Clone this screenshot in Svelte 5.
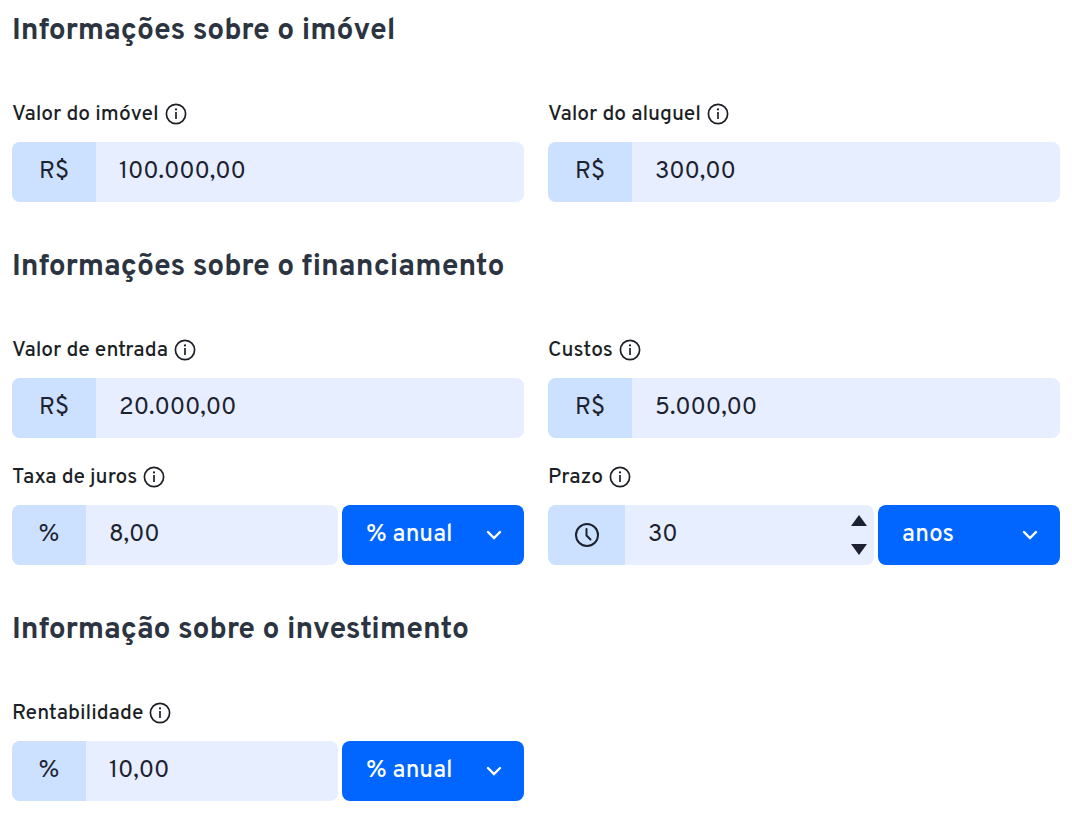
<script>
    const sections = $state([
        {
            title: 'Informações sobre o imóvel',
            fields: [
                { id: 'imovel', label: 'Valor do imóvel', affix: 'R$', value: '100.000,00' },
                { id: 'aluguel', label: 'Valor do aluguel', affix: 'R$', value: '300,00' }
            ]
        },
        {
            title: 'Informações sobre o financiamento',
            fields: [
                { id: 'entrada', label: 'Valor de entrada', affix: 'R$', value: '20.000,00' },
                { id: 'custos', label: 'Custos', affix: 'R$', value: '5.000,00' },
                { id: 'juros', label: 'Taxa de juros', affix: '%', value: '8,00', unit: '% anual', units: ['% anual', '% mensal'] },
                { id: 'prazo', label: 'Prazo', affix: 'clock', value: '30', unit: 'anos', units: ['anos', 'meses'], stepper: true }
            ]
        },
        {
            title: 'Informação sobre o investimento',
            fields: [
                { id: 'rentabilidade', label: 'Rentabilidade', affix: '%', value: '10,00', unit: '% anual', units: ['% anual', '% mensal'] }
            ]
        }
    ]);

    function step(field, amount) {
        field.value = String(Math.max(0, (parseInt(field.value, 10) || 0) + amount));
    }
</script>

<form class="simulator" onsubmit={(event) => event.preventDefault()}>
    {#each sections as section}
        <section>
            <h2>{section.title}</h2>
            <div class="grid">
                {#each section.fields as field}
                    <div class="field">
                        <div class="caption">
                            <label for={field.id}>{field.label}</label>
                            <button type="button" class="info" aria-label="Ajuda: {field.label}">
                                <svg viewBox="0 0 22 22" width="22" height="22" aria-hidden="true">
                                    <circle cx="11" cy="11" r="9.6" fill="none" stroke="currentColor" stroke-width="1.7" />
                                    <path d="M11 9v7" stroke="currentColor" stroke-width="1.7" />
                                    <circle cx="11" cy="6.4" r="1.1" fill="currentColor" />
                                </svg>
                            </button>
                        </div>

                        <div class="row">
                            <div class="box">
                                <span class="affix" class:narrow={field.affix === '%'} class:clock={field.affix === 'clock'}>
                                    {#if field.affix === 'clock'}
                                        <svg viewBox="0 0 26 26" width="26" height="26" fill="none" stroke="currentColor" stroke-width="2" aria-hidden="true">
                                            <circle cx="13" cy="13" r="11" />
                                            <path d="M12.5 7v6.5l4 4" stroke-linecap="round" stroke-linejoin="round" />
                                        </svg>
                                    {:else}
                                        {field.affix}
                                    {/if}
                                </span>
                                <input id={field.id} type="text" inputmode="decimal" bind:value={field.value} />
                                {#if field.stepper}
                                    <span class="stepper">
                                        <button type="button" aria-label="Aumentar" onclick={() => step(field, 1)}>
                                            <svg viewBox="0 0 16 11" width="16" height="11" aria-hidden="true"><path d="M8 0l8 11H0z" fill="currentColor" /></svg>
                                        </button>
                                        <button type="button" aria-label="Diminuir" onclick={() => step(field, -1)}>
                                            <svg viewBox="0 0 16 11" width="16" height="11" aria-hidden="true"><path d="M8 11L0 0h16z" fill="currentColor" /></svg>
                                        </button>
                                    </span>
                                {/if}
                            </div>

                            {#if field.units}
                                <div class="unit">
                                    <select bind:value={field.unit} aria-label="Unidade: {field.label}">
                                        {#each field.units as unit}
                                            <option value={unit}>{unit}</option>
                                        {/each}
                                    </select>
                                    <svg class="chevron" viewBox="0 0 16 10" width="16" height="10" aria-hidden="true">
                                        <path d="M2 2l6 6 6-6" fill="none" stroke="currentColor" stroke-width="2.4" stroke-linecap="round" />
                                    </svg>
                                </div>
                            {/if}
                        </div>
                    </div>
                {/each}
            </div>
        </section>
    {/each}
</form>

<style>
    :global(body) {
        background: #fff;
    }

    .simulator {
        display: grid;
        gap: 48px;
        padding: 14px 12px 12px;
        font-family: Overpass, Inter, sans-serif;
        color: #1c2230;
    }

    h2 {
        margin: 0 0 53px;
        font-size: 30px;
        line-height: 36px;
        font-weight: 700;
        color: #2b3440;
    }

    .grid {
        display: grid;
        grid-template-columns: repeat(2, minmax(0, 1fr));
        gap: 28px 24px;
    }

    .caption {
        display: flex;
        align-items: center;
        gap: 6px;
        height: 24px;
        margin-bottom: 15px;
        color: #1c1f26;
    }

    label {
        font-size: 21px;
        line-height: 24px;
        font-weight: 500;
    }

    button {
        display: block;
        padding: 0;
        border: none;
        background: none;
        color: inherit;
        cursor: pointer;
    }

    svg {
        display: block;
    }

    .info {
        padding-bottom: 2px;
    }

    .row {
        display: flex;
        gap: 4px;
        height: 60px;
    }

    .box {
        display: flex;
        flex: 1;
        min-width: 0;
        border-radius: 8px;
        background: #e6eeff;
        overflow: hidden;
    }

    .affix {
        display: flex;
        flex: 0 0 84px;
        align-items: center;
        justify-content: center;
        background: #cce0ff;
        font-size: 24px;
    }

    .affix.narrow {
        flex-basis: 74px;
    }

    .affix.clock {
        flex-basis: 77px;
    }

    input {
        flex: 1;
        min-width: 0;
        padding: 0 0 0 23px;
        border: none;
        background: transparent;
        font: inherit;
        font-size: 24px;
        color: inherit;
    }

    .stepper {
        display: flex;
        flex-direction: column;
        justify-content: center;
        gap: 18px;
        padding-right: 7px;
    }

    .unit {
        position: relative;
        flex: 0 0 182px;
    }

    select {
        appearance: none;
        width: 100%;
        height: 100%;
        padding: 0 48px 0 24px;
        border: none;
        border-radius: 8px;
        background: #0066ff;
        font: inherit;
        font-size: 24px;
        font-weight: 500;
        color: #fff;
        cursor: pointer;
    }

    .chevron {
        position: absolute;
        top: 25px;
        right: 22px;
        color: #fff;
        pointer-events: none;
    }

    input:focus-visible,
    select:focus-visible,
    button:focus-visible {
        outline: 2px solid #003d99;
        outline-offset: -2px;
    }
</style>
